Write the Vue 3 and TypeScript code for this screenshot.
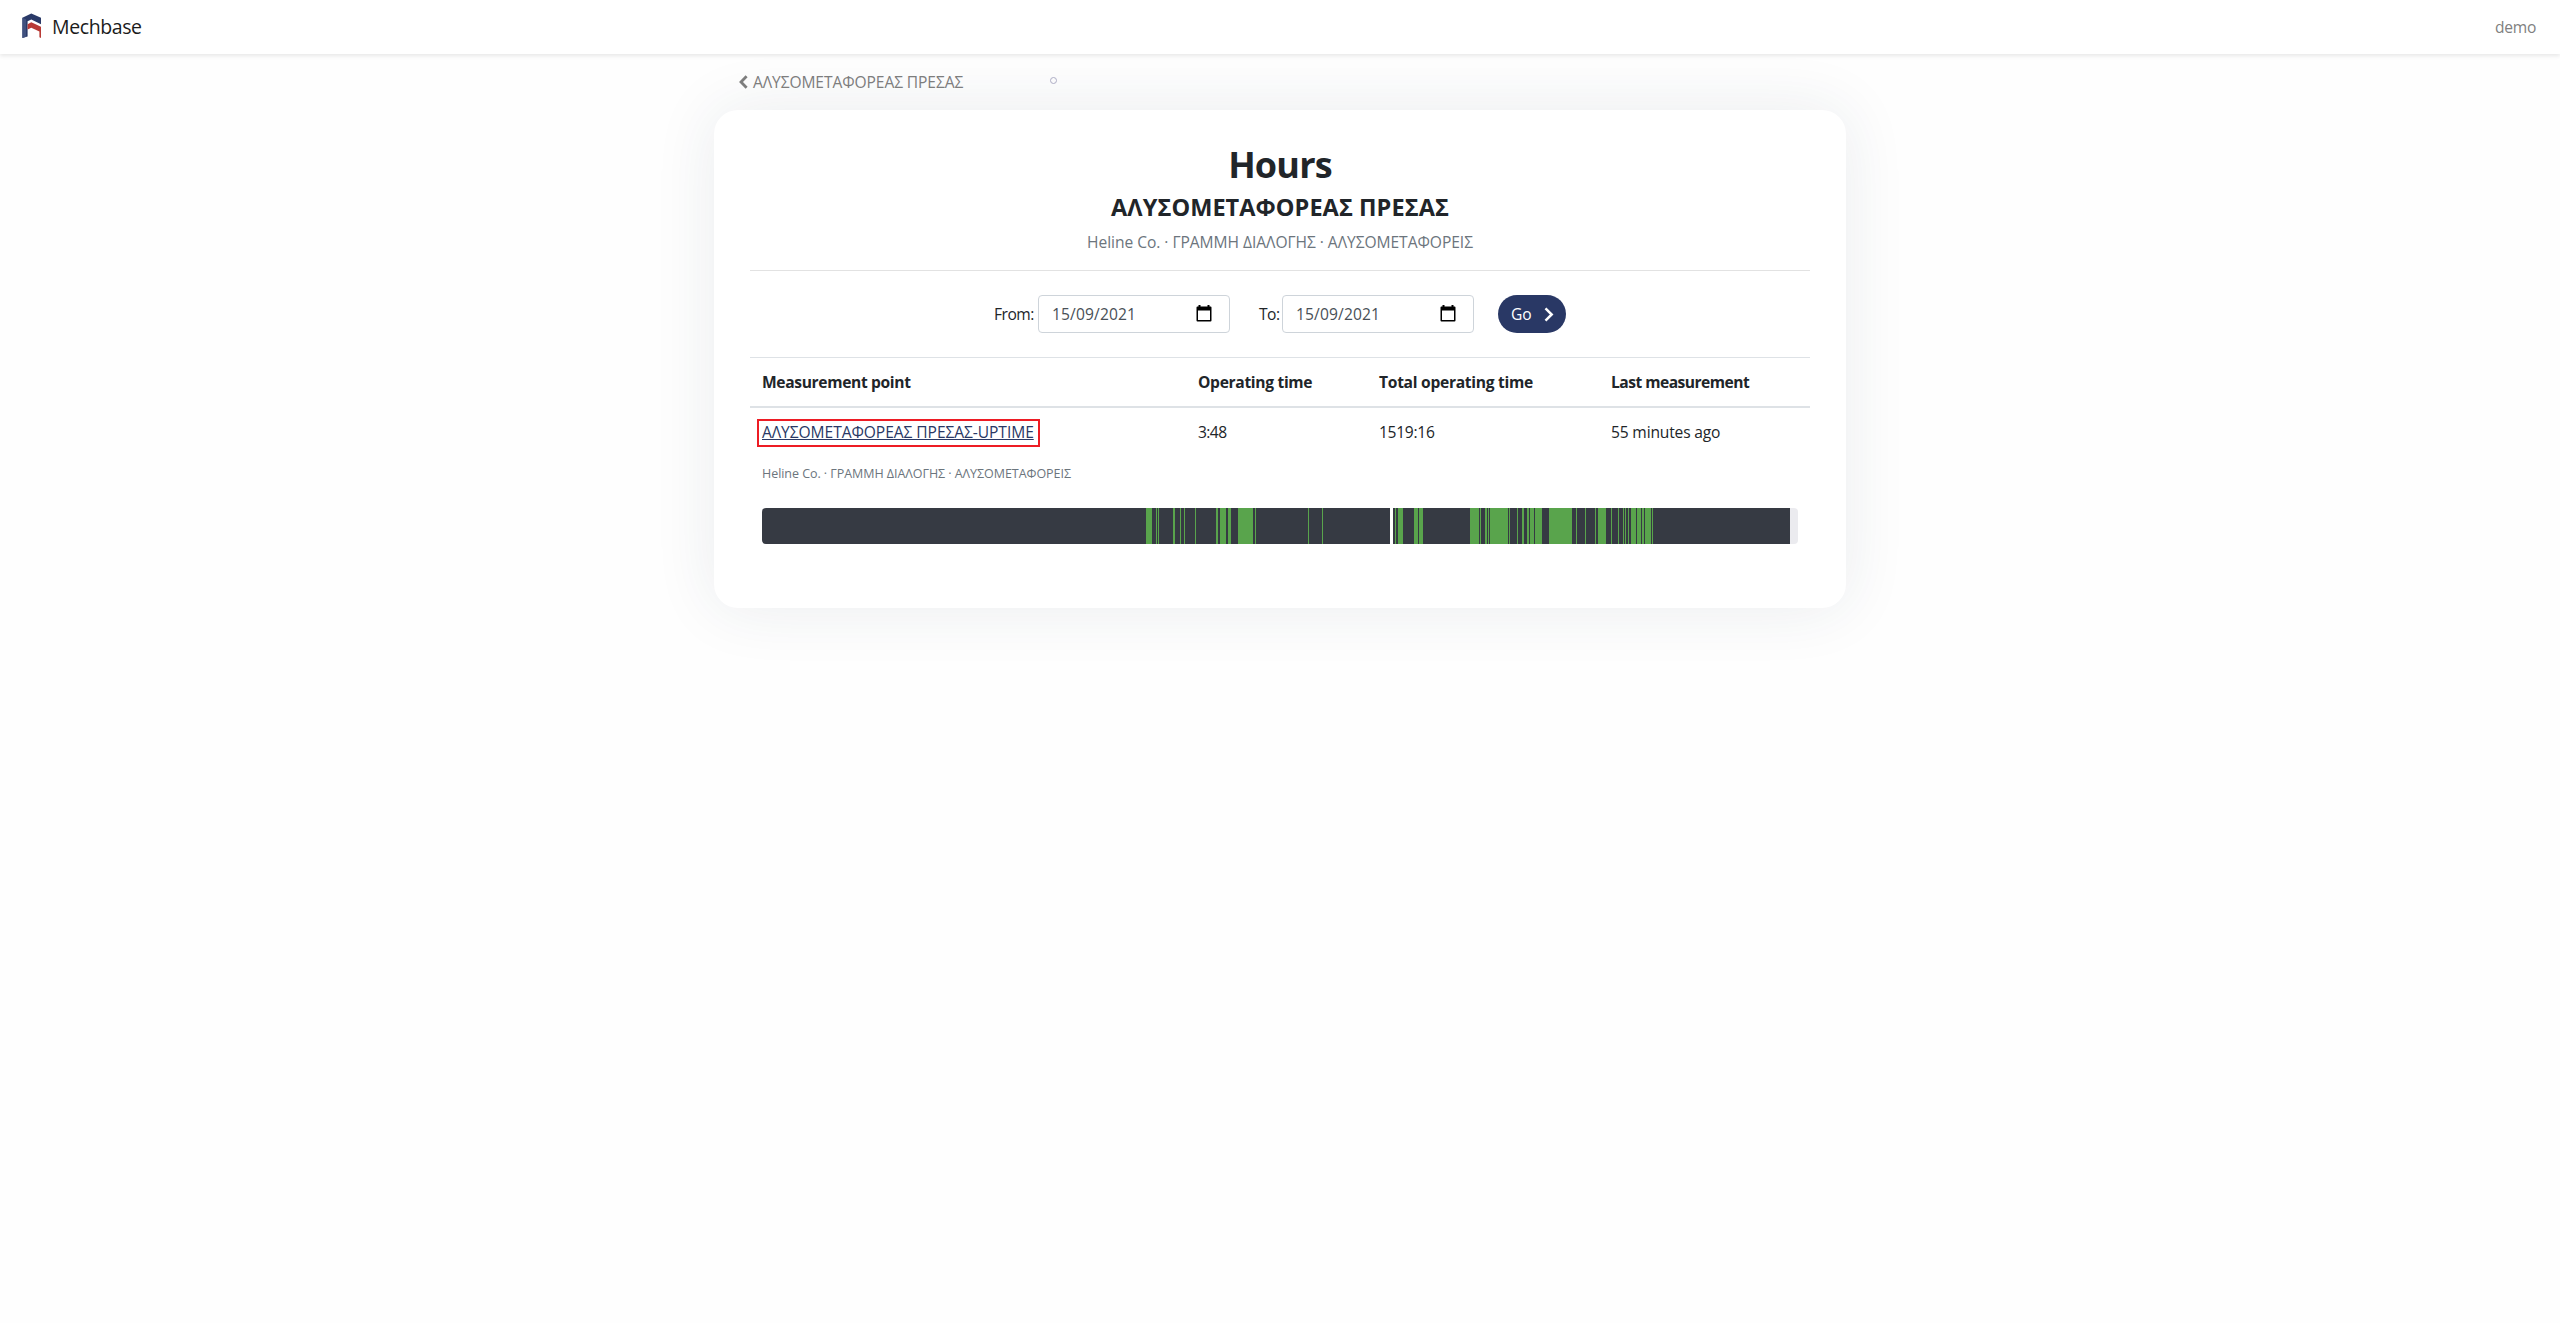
<script setup lang="ts">
interface Field { id: string; label: string; value: string }

const fields: Field[] = [
  { id: 'from', label: 'From:', value: '15/09/2021' },
  { id: 'to', label: 'To:', value: '15/09/2021' },
]

const path = 'Heline Co. · ΓΡΑΜΜΗ ΔΙΑΛΟΓΗΣ · ΑΛΥΣΟΜΕΤΑΦΟΡΕΙΣ'

// Running intervals on the timeline: [start, length]
const running: [number, number][] = [
  [384, 6], [394, 1], [396, 1], [411, 2], [418, 1], [422, 1], [433, 1],
  [454, 2], [458, 6], [466, 3], [476, 15], [493, 1], [546, 1], [560, 1],
  [633, 1], [636, 5], [652, 4], [657, 4], [708, 9], [718, 1], [723, 2],
  [726, 1], [728, 18], [747, 1], [755, 1], [760, 2], [765, 2], [768, 4],
  [773, 7], [787, 23], [814, 1], [823, 1], [833, 1], [836, 8], [849, 1],
  [856, 1], [861, 1], [863, 1], [866, 1], [869, 5], [875, 4], [880, 2],
  [883, 6], [890, 1],
]
</script>

<template>
  <div class="page">
    <nav class="navbar">
      <a class="brand">
        <svg class="logo" width="20" height="26" viewBox="0 0 20 26">
          <path d="M0.4 4.8 9.3 0.5 19 4.8V11.2L9.3 6.6 5.6 8.3V23.4L0.4 25Z" fill="#2a3a68" />
          <path d="M0.4 4.8 4 6.3V23.8L0.4 25Z" fill="#40517f" />
          <path d="M5.6 11.3 9.3 9.2 19 13.8V25L17.4 24.3V18.6L9.3 14.8 5.6 16.6Z" fill="#b83a36" />
        </svg>
        <span class="brand-name">Mechbase</span>
      </a>
      <span class="user">demo</span>
    </nav>

    <main class="container">
      <div class="crumbs">
        <svg width="9" height="14" viewBox="0 0 9 14"><path d="M7.6 1.2 2 7l5.6 5.8" fill="none" stroke="#7d7d7d" stroke-width="2.8" /></svg>
        <span class="back">ΑΛΥΣΟΜΕΤΑΦΟΡΕΑΣ ΠΡΕΣΑΣ</span>
        <i class="dot"></i>
      </div>

      <section class="card">
        <h1>Hours</h1>
        <h2>ΑΛΥΣΟΜΕΤΑΦΟΡΕΑΣ ΠΡΕΣΑΣ</h2>
        <p class="path">{{ path }}</p>
        <form class="filters">
          <div v-for="f in fields" :key="f.id" class="field" :class="f.id">
            <label>{{ f.label }}</label>
            <div class="date">
              <span>{{ f.value }}</span>
              <svg width="16" height="17" viewBox="0 0 16 17">
                <path d="M2.5 0h2v1.5h7V0h2v1.5H14.500q1 0 1 1V15.500q0 1-1 1H1.500q-1 0-1-1V2.500q0-1 1-1h1ZM2 5.500V15H14V5.500Z" fill="#000" fill-rule="evenodd" />
              </svg>
            </div>
          </div>
          <button type="button">
            <span>Go</span>
            <svg width="10" height="15" viewBox="0 0 10 15"><path d="M1.500 1.300 7.700 7.500 1.500 13.700" fill="none" stroke="#fff" stroke-width="2.500" /></svg>
          </button>
        </form>

        <div class="row head">
          <span class="t1">Measurement point</span>
          <span class="t2">Operating time</span>
          <span class="t3">Total operating time</span>
          <span class="t4">Last measurement</span>
        </div>
        <div class="row body">
          <span><a class="point">ΑΛΥΣΟΜΕΤΑΦΟΡΕΑΣ ΠΡΕΣΑΣ-UPTIME</a></span>
          <span class="v2">3:48</span>
          <span class="v3">1519:16</span>
          <span class="v4">55 minutes ago</span>
        </div>
        <p class="small-path">{{ path }}</p>
        <svg class="timeline" width="1036" height="36" viewBox="0 0 1036 36" shape-rendering="crispEdges">
          <rect width="1036" height="36" fill="#ebebef" />
          <rect width="628" height="36" fill="#363a43" />
          <rect x="628" width="3" height="36" fill="#fff" />
          <rect x="631" width="397" height="36" fill="#363a43" />
          <rect v-for="[x, w] in running" :key="x" :x="x" :width="w" height="36" fill="#59a44c" />
        </svg>
      </section>
    </main>
  </div>
</template>

<style>
body { margin: 0; background: #fefefe; }
</style>

<style scoped>
* { box-sizing: border-box; }
.page {
  min-height: 1323px;
  color: #212529;
  font-family: "Open Sans", "Noto Sans", sans-serif;
  font-size: 15.6px;
  line-height: 24px;
  white-space: nowrap;
}
.navbar {
  position: relative;
  display: flex;
  align-items: center;
  justify-content: space-between;
  height: 54px;
  padding: 0 24px 0 22px;
  background: #fff;
  box-shadow: 0 2px 4px rgba(0, 0, 0, .09);
}
.brand { display: flex; align-items: center; gap: 10px; }
.logo { display: block; margin-top: -2px; }
.brand-name { font-size: 19.500px; color: #1b1b1b; letter-spacing: -.4px; }
.user { color: #808080; letter-spacing: -.3px; }
.container { width: 1132px; margin: 0 auto; }
.crumbs { display: flex; align-items: center; height: 56px; padding-left: 25px; color: #7d7d7d; }
.crumbs svg { margin: 0 5px 1px 0; }
.dot { width: 7px; height: 7px; margin: 0 0 4px 86px; border: 1px solid #adadc4; border-radius: 50%; }
.back { width: 211px; letter-spacing: -.1px; }
.card {
  height: 498px;
  padding: 36px;
  border-radius: 24px;
  background: #fff;
  box-shadow: 0 0 64px rgba(30, 50, 80, .09);
}
h1, h2, p { margin: 0; text-align: center; }
h1 { height: 43px; font-size: 36px; line-height: 38px; letter-spacing: -.8px; }
h2 { height: 36px; font-size: 23.500px; line-height: 36px; letter-spacing: .06px; }
.path { height: 46px; padding-top: 5px; border-bottom: 1px solid #e2e2e2; color: #6c757d; letter-spacing: -.05px; }
.filters { display: flex; align-items: center; height: 86px; padding-left: 244px; }
.field { display: flex; align-items: center; }
.field label { width: 44px; letter-spacing: -.5px; }
.field.to label { width: 23px; }
.field.to { margin-left: 29px; }
.date {
  display: flex;
  align-items: center;
  justify-content: space-between;
  width: 192px;
  height: 38px;
  padding: 0 17px 0 13px;
  border: 1px solid #ced4da;
  border-radius: 4px;
  color: #495057;
  letter-spacing: .13px;
}
.date svg { margin-bottom: 2px; }
button {
  display: flex;
  align-items: center;
  justify-content: space-between;
  width: 68px;
  height: 38px;
  margin-left: 24px;
  padding: 0 12px 0 13px;
  border: 0;
  border-radius: 19px;
  background: #293865;
  color: #fff;
  font: inherit;
}
.row { display: grid; grid-template-columns: 436px 181px 232px 1fr; padding: 0 12px; }
.head { height: 51px; padding-top: 12px; border-top: 1px solid #dee2e6; border-bottom: 2px solid #dee2e6; font-weight: 700; }
.t1 { letter-spacing: -.35px; }
.t2 { letter-spacing: -.32px; }
.t3 { letter-spacing: -.28px; }
.t4 { letter-spacing: -.52px; }
.v2 { letter-spacing: -.6px; }
.v3 { letter-spacing: -.3px; }
.v4 { letter-spacing: -.17px; }
.body { height: 52px; padding-top: 12px; }
.point {
  display: block;
  width: 283px;
  height: 28px;
  margin: -1px 0 0 -5px;
  padding-left: 3px;
  border: 2px solid #ed1c24;
  color: #293865;
  line-height: 22px;
  letter-spacing: -.07px;
  text-decoration: underline;
  text-underline-offset: 1px;
}
.small-path { height: 48px; padding-left: 12px; color: #6c757d; font-size: 12.500px; line-height: 27px; letter-spacing: -.05px; text-align: left; }
.timeline { display: block; margin-left: 12px; border-radius: 4px; }
</style>
